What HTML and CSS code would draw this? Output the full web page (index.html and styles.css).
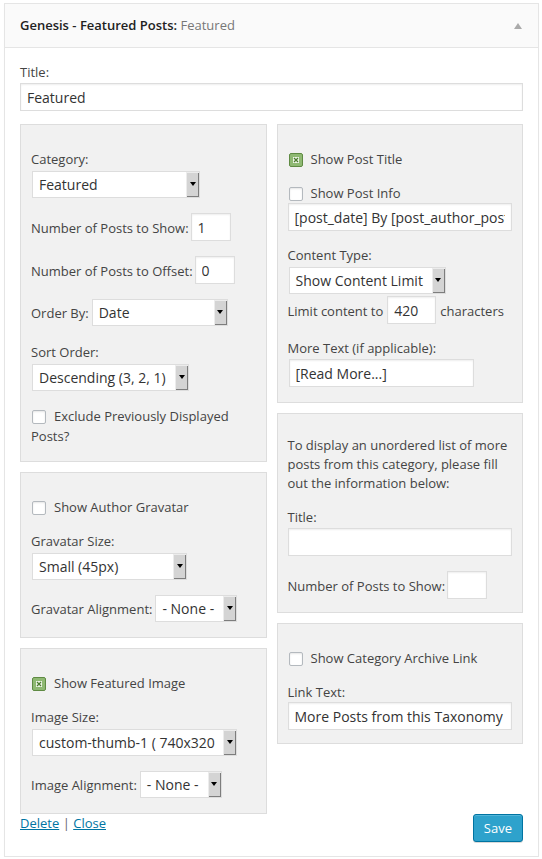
FILE: index.html
```html
<!DOCTYPE html>
<html lang="en">
<head>
    <meta charset="UTF-8">
    <meta name="viewport" content="width=device-width, initial-scale=1.0">
    <title>Genesis - Featured Posts</title>
    <link rel="stylesheet" href="styles.css">
</head>
<body>

    <div class="widget">
        <div class="widget-top">
            <h4>Genesis - Featured Posts:<span class="in-widget-title"> Featured</span></h4>
            <span class="widget-toggle"></span>
        </div>

        <div class="widget-inside">
            <div class="stack">
                <label>Title:</label>
                <input type="text" class="text full" value="Featured">
            </div>

            <div class="columns">
                <!-- left column -->
                <div class="column">
                    <div class="box">
                        <div class="stack">
                            <label>Category:</label>
                            <span class="select sel-category"><span class="select-value">Featured</span><span class="select-btn"></span></span>
                        </div>
                        <div class="inline">
                            <label>Number of Posts to Show:</label>
                            <input type="text" class="text num" value="1">
                        </div>
                        <div class="inline">
                            <label>Number of Posts to Offset:</label>
                            <input type="text" class="text num" value="0">
                        </div>
                        <div class="inline">
                            <label>Order By:</label>
                            <span class="select sel-orderby"><span class="select-value">Date</span><span class="select-btn"></span></span>
                        </div>
                        <div class="stack spaced">
                            <label>Sort Order:</label>
                            <span class="select sel-sort"><span class="select-value">Descending (3, 2, 1)</span><span class="select-btn"></span></span>
                        </div>
                        <p class="check-wrap"><span class="check"></span>Exclude Previously Displayed Posts?</p>
                    </div>

                    <div class="box">
                        <div class="check-row"><span class="check"></span><label>Show Author Gravatar</label></div>
                        <div class="stack">
                            <label>Gravatar Size:</label>
                            <span class="select sel-gravsize"><span class="select-value">Small (45px)</span><span class="select-btn"></span></span>
                        </div>
                        <div class="inline">
                            <label>Gravatar Alignment:</label>
                            <span class="select sel-align"><span class="select-value">- None -</span><span class="select-btn"></span></span>
                        </div>
                    </div>

                    <div class="box">
                        <div class="check-row">
                            <span class="check on"><svg width="14" height="14" viewBox="0 0 14 14"><rect x="0.5" y="0.5" width="13" height="13" rx="1.5" fill="#8fb973" stroke="#5f8a43"/><rect x="4" y="4" width="6" height="6" fill="#edf4e6"/><path d="M5 5l4 4M9 5l-4 4" stroke="#4b7a2e" stroke-width="1.2"/></svg></span>
                            <label>Show Featured Image</label>
                        </div>
                        <div class="stack">
                            <label>Image Size:</label>
                            <span class="select sel-imgsize"><span class="select-value">custom-thumb-1 ( 740x320 )</span><span class="select-btn"></span></span>
                        </div>
                        <div class="inline">
                            <label>Image Alignment:</label>
                            <span class="select sel-align"><span class="select-value">- None -</span><span class="select-btn"></span></span>
                        </div>
                    </div>
                </div>

                <!-- right column -->
                <div class="column">
                    <div class="box">
                        <div class="check-row">
                            <span class="check on"><svg width="14" height="14" viewBox="0 0 14 14"><rect x="0.5" y="0.5" width="13" height="13" rx="1.5" fill="#8fb973" stroke="#5f8a43"/><rect x="4" y="4" width="6" height="6" fill="#edf4e6"/><path d="M5 5l4 4M9 5l-4 4" stroke="#4b7a2e" stroke-width="1.2"/></svg></span>
                            <label>Show Post Title</label>
                        </div>
                        <div class="stack tight">
                            <div class="check-row"><span class="check"></span><label>Show Post Info</label></div>
                            <input type="text" class="text full" value="[post_date] By [post_author_posts_link] [post_comments]">
                        </div>
                        <div class="stack">
                            <label>Content Type:</label>
                            <span class="select sel-content"><span class="select-value">Show Content Limit</span><span class="select-btn"></span></span>
                            <div class="inline limit-row">
                                <label>Limit content to</label>
                                <input type="text" class="text limit" value="420">
                                <label>characters</label>
                            </div>
                        </div>
                        <div class="stack">
                            <label>More Text (if applicable):</label>
                            <input type="text" class="text more" value="[Read More...]">
                        </div>
                    </div>

                    <div class="box compact">
                        <p class="intro">To display an unordered list of more posts from this category, please fill out the information below:</p>
                        <div class="stack">
                            <label>Title:</label>
                            <input type="text" class="text full" value="">
                        </div>
                        <div class="inline">
                            <label>Number of Posts to Show:</label>
                            <input type="text" class="text num" value="">
                        </div>
                    </div>

                    <div class="box compact">
                        <div class="check-row"><span class="check"></span><label>Show Category Archive Link</label></div>
                        <div class="stack tight">
                            <label>Link Text:</label>
                            <input type="text" class="text full" value="More Posts from this Taxonomy">
                        </div>
                    </div>
                </div>
            </div>

            <div class="widget-control-actions">
                <div class="links"><a href="#">Delete</a> <span class="sep">|</span> <a href="#">Close</a></div>
                <button class="button-primary">Save</button>
            </div>
        </div>
    </div>

</body>
</html>
```

FILE: styles.css
```css
body {
    margin: 0;
    background-color: #fff;
    font-family: 'Open Sans', sans-serif;
    font-size: 13px;
    line-height: 19px;
    color: #444;
}

.widget {
    width: 535px;
    margin: 3px 0 0 4px;
    box-sizing: border-box;
    border: 1px solid #e5e5e5;
    background-color: #fff;
    box-shadow: 0 1px 1px rgba(0, 0, 0, 0.04);
}

.widget-top {
    height: 43px;
    display: flex;
    align-items: center;
    justify-content: space-between;
    padding: 0 16px 0 15px;
    background-color: #fafafa;
    border-bottom: 1px solid #e5e5e5;
}

.widget-top h4 {
    margin: 0;
    font-size: 13px;
    font-weight: 600;
    color: #222;
}

.in-widget-title {
    font-weight: normal;
    color: #777;
}

.widget-toggle {
    width: 0;
    height: 0;
    border-left: 4px solid transparent;
    border-right: 4px solid transparent;
    border-bottom: 6px solid #aaa;
}

.widget-inside {
    padding: 15px 15px 14px;
}

/* form controls */
.text {
    box-sizing: border-box;
    height: 28px;
    margin: 0;
    padding: 3px 6px;
    border: 1px solid #ddd;
    background-color: #fff;
    box-shadow: inset 0 1px 2px rgba(0, 0, 0, 0.07);
    font-family: 'Open Sans', sans-serif;
    font-size: 14px;
    color: #333;
    outline: none;
}

.full { width: 100%; }
.num { width: 40px; }
.limit { width: 49px; }
.more { width: 185px; margin-left: 1px; }

.select {
    box-sizing: border-box;
    height: 27px;
    display: flex;
    margin-left: 1px;
    border: 1px solid #ddd;
    background-color: #fff;
    font-size: 14px;
    color: #333;
}

.select-value {
    flex: 1;
    overflow: hidden;
    white-space: nowrap;
    padding-left: 6px;
    line-height: 25px;
}

.select-btn {
    width: 13px;
    flex: none;
    display: flex;
    align-items: center;
    justify-content: center;
    background-color: #d4d4d4;
    box-shadow: inset 1px 1px 0 #ececec, inset -1px -1px 0 #7d7d7d;
}

.select-btn::after {
    content: "";
    width: 0;
    height: 0;
    margin-top: -1px;
    border-left: 3px solid transparent;
    border-right: 3px solid transparent;
    border-top: 4px solid #000;
}

.sel-category { width: 168px; }
.sel-orderby { width: 136px; }
.sel-sort { width: 157px; }
.sel-gravsize { width: 155px; }
.sel-align { width: 82px; }
.sel-imgsize { width: 205px; }
.sel-content { width: 157px; }

/* long option text gets cut short before the arrow */
.sel-imgsize .select-value {
    margin-right: 7px;
}

.check {
    box-sizing: border-box;
    width: 14px;
    height: 14px;
    flex: none;
    margin-left: 1px;
    border: 1px solid #b4b9be;
    border-radius: 2px;
    background-color: #fff;
    box-shadow: inset 0 1px 2px rgba(0, 0, 0, 0.1);
}

.check.on {
    border: none;
    border-radius: 0;
    box-shadow: none;
}

.check svg {
    display: block;
}

/* layout */
.columns {
    display: grid;
    grid-template-columns: 1fr 1fr;
    column-gap: 10px;
    align-items: start;
    margin-top: 13px;
}

.column {
    display: flex;
    flex-direction: column;
    gap: 10px;
}

.box {
    display: flex;
    flex-direction: column;
    gap: 15px;
    padding: 25px 10px 15px;
    background-color: #f1f1f1;
    border: 1px solid #ddd;
}

.box.compact {
    padding-bottom: 13px;
}

.stack {
    display: flex;
    flex-direction: column;
    align-items: flex-start;
    gap: 1px;
}

.stack label {
    display: block;
}

.stack .select {
    margin-top: 1px;
}

.stack.tight {
    gap: 0;
}

.stack.spaced {
    margin-top: 2px;
}

.inline {
    display: flex;
    align-items: baseline;
    gap: 2px;
    white-space: nowrap;
}

.limit-row {
    gap: 4px;
    margin-top: 1px;
}

.check-row {
    display: flex;
    align-items: center;
    gap: 8px;
}

.check-wrap {
    margin: 0;
    line-height: 20px;
}

.check-wrap .check {
    display: inline-block;
    vertical-align: -3px;
    margin-right: 8px;
}

.intro {
    margin: -3px 0 0;
}

/* footer */
.widget-control-actions {
    display: flex;
    justify-content: space-between;
    align-items: flex-start;
}

.links a {
    color: #0074a2;
}

.links .sep {
    color: #666;
}

.button-primary {
    height: 28px;
    padding: 0 10px 1px;
    border: 1px solid #0074a2;
    border-radius: 3px;
    background-color: #2ea2cc;
    box-shadow: inset 0 1px 0 rgba(120, 200, 230, 0.5), 0 1px 0 rgba(0, 0, 0, 0.15);
    color: #fff;
    font-family: 'Open Sans', sans-serif;
    font-size: 13px;
    line-height: 26px;
    cursor: pointer;
}
```
